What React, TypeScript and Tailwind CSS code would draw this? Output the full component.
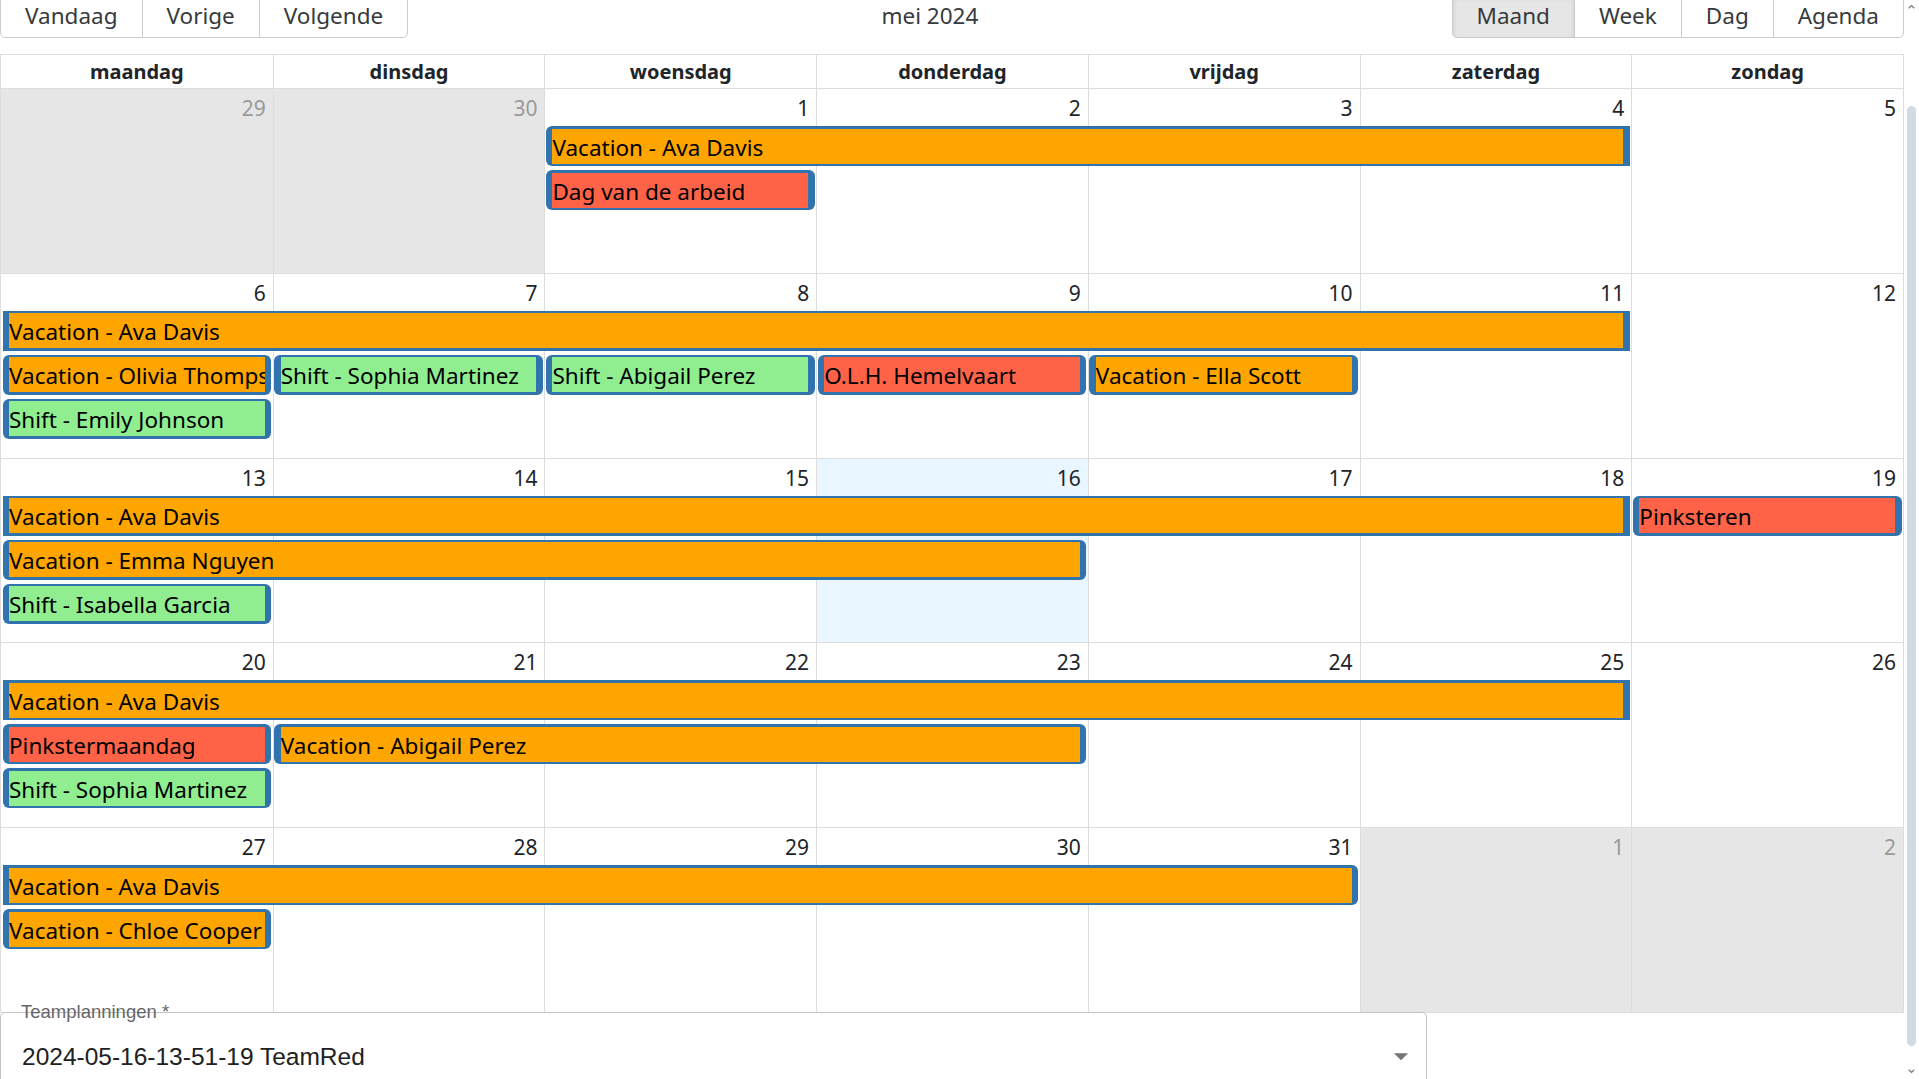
import React from "react";

type Ev = {
  title: string;
  col: number;
  span: number;
  row: number;
  color: "orange" | "red" | "green";
  prior?: boolean;
  after?: boolean;
};

type Week = {
  days: { n: number; off?: boolean; today?: boolean }[];
  events: Ev[];
};

const colStart = [
  "",
  "col-start-1",
  "col-start-2",
  "col-start-3",
  "col-start-4",
  "col-start-5",
  "col-start-6",
  "col-start-7",
];
const colSpan = [
  "",
  "col-span-1",
  "col-span-2",
  "col-span-3",
  "col-span-4",
  "col-span-5",
  "col-span-6",
  "col-span-7",
];
const rowStart = ["", "row-start-1", "row-start-2", "row-start-3", "row-start-4"];

const fill = {
  orange: "bg-[#ffa500]",
  red: "bg-[#ff6347]",
  green: "bg-[#90ee90]",
};

const dayNames = ["maandag", "dinsdag", "woensdag", "donderdag", "vrijdag", "zaterdag", "zondag"];

const weeks: Week[] = [
  {
    days: [{ n: 29, off: true }, { n: 30, off: true }, { n: 1 }, { n: 2 }, { n: 3 }, { n: 4 }, { n: 5 }],
    events: [
      { title: "Vacation - Ava Davis", col: 3, span: 4, row: 2, color: "orange", after: true },
      { title: "Dag van de arbeid", col: 3, span: 1, row: 3, color: "red" },
    ],
  },
  {
    days: [{ n: 6 }, { n: 7 }, { n: 8 }, { n: 9 }, { n: 10 }, { n: 11 }, { n: 12 }],
    events: [
      { title: "Vacation - Ava Davis", col: 1, span: 6, row: 2, color: "orange", prior: true, after: true },
      { title: "Vacation - Olivia Thompson", col: 1, span: 1, row: 3, color: "orange" },
      { title: "Shift - Sophia Martinez", col: 2, span: 1, row: 3, color: "green" },
      { title: "Shift - Abigail Perez", col: 3, span: 1, row: 3, color: "green" },
      { title: "O.L.H. Hemelvaart", col: 4, span: 1, row: 3, color: "red" },
      { title: "Vacation - Ella Scott", col: 5, span: 1, row: 3, color: "orange" },
      { title: "Shift - Emily Johnson", col: 1, span: 1, row: 4, color: "green" },
    ],
  },
  {
    days: [{ n: 13 }, { n: 14 }, { n: 15 }, { n: 16, today: true }, { n: 17 }, { n: 18 }, { n: 19 }],
    events: [
      { title: "Vacation - Ava Davis", col: 1, span: 6, row: 2, color: "orange", prior: true, after: true },
      { title: "Pinksteren", col: 7, span: 1, row: 2, color: "red" },
      { title: "Vacation - Emma Nguyen", col: 1, span: 4, row: 3, color: "orange" },
      { title: "Shift - Isabella Garcia", col: 1, span: 1, row: 4, color: "green" },
    ],
  },
  {
    days: [{ n: 20 }, { n: 21 }, { n: 22 }, { n: 23 }, { n: 24 }, { n: 25 }, { n: 26 }],
    events: [
      { title: "Vacation - Ava Davis", col: 1, span: 6, row: 2, color: "orange", prior: true, after: true },
      { title: "Pinkstermaandag", col: 1, span: 1, row: 3, color: "red" },
      { title: "Vacation - Abigail Perez", col: 2, span: 3, row: 3, color: "orange" },
      { title: "Shift - Sophia Martinez", col: 1, span: 1, row: 4, color: "green" },
    ],
  },
  {
    days: [{ n: 27 }, { n: 28 }, { n: 29 }, { n: 30 }, { n: 31 }, { n: 1, off: true }, { n: 2, off: true }],
    events: [
      { title: "Vacation - Ava Davis", col: 1, span: 5, row: 2, color: "orange", prior: true },
      { title: "Vacation - Chloe Cooper", col: 1, span: 1, row: 3, color: "orange" },
    ],
  },
];

function Btn({ label, active, first, last }: { label: string; active?: boolean; first?: boolean; last?: boolean }) {
  return (
    <button
      className={
        "h-[44px] border border-[#cccccc] px-[24px] text-[22.5px] text-[#373a3c] " +
        (first ? "rounded-l-[5px] " : "-ml-px ") +
        (last ? "rounded-r-[5px] " : "") +
        (active ? "bg-[#e6e6e6] shadow-[inset_0_3px_5px_rgba(0,0,0,0.125)]" : "bg-white")
      }
    >
      {label}
    </button>
  );
}

function Event({ ev }: { ev: Ev }) {
  return (
    <div className={`${colStart[ev.col]} ${colSpan[ev.span]} ${rowStart[ev.row]} px-[1.5px] pt-px`}>
      <div
        className={
          "h-[40px] bg-[#3174ad] px-[6.5px] py-[2.5px] " +
          (ev.prior ? "" : "rounded-l-[6px] ") +
          (ev.after ? "" : "rounded-r-[6px]")
        }
      >
        <div
          className={`${fill[ev.color]} h-[35px] overflow-hidden whitespace-nowrap text-[22.5px] leading-[37px] text-black`}
        >
          {ev.title}
        </div>
      </div>
    </div>
  );
}

function WeekRow({ week }: { week: Week }) {
  return (
    <div className="grid h-[184.8px] grid-cols-7 grid-rows-[36px_44px_44px_44px_1fr] border-t border-[#dddddd]">
      {week.days.map((d, i) => (
        <div
          key={"bg" + i}
          className={
            `${colStart[i + 1]} row-span-full ` +
            (i > 0 ? "border-l border-[#dddddd] " : "") +
            (d.off ? "bg-[#e6e6e6]" : d.today ? "bg-[#eaf6ff]" : "")
          }
        />
      ))}
      {week.days.map((d, i) => (
        <div
          key={"d" + i}
          className={`${colStart[i + 1]} row-start-1 pr-[7px] pt-[3px] text-right text-[21px] leading-[32px] ${
            d.off ? "text-[#999999]" : "text-[#212529]"
          }`}
        >
          {d.n}
        </div>
      ))}
      {week.events.map((ev, i) => (
        <Event key={"e" + i} ev={ev} />
      ))}
    </div>
  );
}

export default function App() {
  return (
    <div className="flex h-screen w-full overflow-hidden bg-white font-['Noto_Sans',sans-serif] text-[#373a3c]">
      <div className="flex min-w-0 flex-1 flex-col">
        <div className="-mt-[6px] mb-[16px] flex items-center">
          <div className="flex">
            <Btn label="Vandaag" first />
            <Btn label="Vorige" />
            <Btn label="Volgende" last />
          </div>
          <div className="flex-1 text-center text-[22.5px] leading-[44px]">mei 2024</div>
          <div className="flex">
            <Btn label="Maand" first active />
            <Btn label="Week" />
            <Btn label="Dag" />
            <Btn label="Agenda" last />
          </div>
        </div>

        <div className="border border-[#dddddd]">
          <div className="grid h-[33px] grid-cols-7">
            {dayNames.map((d, i) => (
              <div
                key={d}
                className={`text-center text-[20px] font-bold leading-[33px] text-[#212529] ${
                  i > 0 ? "border-l border-[#dddddd]" : ""
                }`}
              >
                {d}
              </div>
            ))}
          </div>
          {weeks.map((w, i) => (
            <WeekRow key={i} week={w} />
          ))}
        </div>

        <div className="relative -mt-px w-[1427px] font-['Liberation_Sans',Arial,sans-serif]">
          <div className="h-[80px] rounded-[5px] border border-[#c4c4c4]">
            <div className="flex h-full items-start pl-[21px] pr-[8px] pt-[26px]">
              <span className="flex-1 text-[24.5px] text-[#212121]">2024-05-16-13-51-19 TeamRed</span>
              <svg width="34" height="34" viewBox="0 0 24 24" className="mt-0">
                <path d="M7 10l5 5 5-5z" fill="#757575" />
              </svg>
            </div>
          </div>
          <span className="absolute left-[21px] top-[-11px] text-[18.5px] leading-[22px] text-[#666666]">
            Teamplanningen *
          </span>
        </div>
      </div>

      <div className="flex w-[15px] flex-col items-center bg-white">
        <svg width="9" height="9" viewBox="0 0 10 10" className="mt-[2px]">
          <path d="M2 7l3-3 3 3" fill="none" stroke="#7a7a7a" strokeWidth="1.5" />
        </svg>
        <div className="mt-[95px] h-[940px] w-[9px] rounded-[5px] bg-[#d3dbe2]" />
        <div className="flex-1" />
        <svg width="9" height="9" viewBox="0 0 10 10" className="mb-[3px]">
          <path d="M2 3l3 3 3-3" fill="none" stroke="#7a7a7a" strokeWidth="1.5" />
        </svg>
      </div>
    </div>
  );
}
